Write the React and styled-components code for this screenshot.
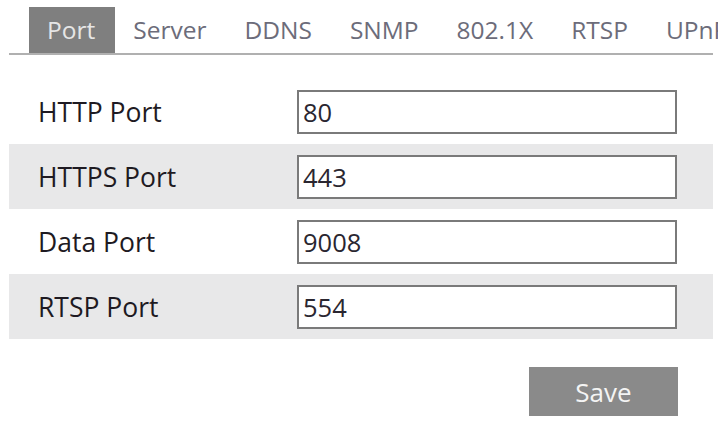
import React from 'react'
import styled, { createGlobalStyle } from 'styled-components'

const GlobalStyle = createGlobalStyle`
  body {
    margin: 0;
    background: #fff;
    font-family: "Open Sans", "Noto Sans", sans-serif;
  }
`

const tabs = ['Port', 'Server', 'DDNS', 'SNMP', '802.1X', 'RTSP', 'UPnP']

const fields = [
  { label: 'HTTP Port', value: '80' },
  { label: 'HTTPS Port', value: '443' },
  { label: 'Data Port', value: '9008' },
  { label: 'RTSP Port', value: '554' },
]

function App() {
  return (
    <Page>
      <GlobalStyle />
      <TabBar>
        {tabs.map((t, i) => (
          <Tab key={t} active={i === 0}>{t}</Tab>
        ))}
      </TabBar>
      <Form>
        {fields.map((f, i) => (
          <Row key={f.label} shaded={i % 2 === 1}>
            <Label>{f.label}</Label>
            <Input defaultValue={f.value} />
          </Row>
        ))}
      </Form>
      <Actions>
        <SaveButton>Save</SaveButton>
      </Actions>
    </Page>
  )
}

export default App

const Page = styled.div`
  width: 718px;
  height: 431px;
  overflow: hidden;
  padding: 7px 0 0 9px;
  box-sizing: border-box;
`

const TabBar = styled.div`
  display: flex;
  margin-right: 5px;
  padding-left: 20px;
  border-bottom: 2px solid #b0b0b0;
  white-space: nowrap;
`

const Tab = styled.div`
  flex: none;
  height: 46px;
  line-height: 46px;
  padding: 0 20px 0 18px;
  font-size: 24.5px;
  color: ${p => (p.active ? '#e6e6e6' : '#6c6c7a')};
  background: ${p => (p.active ? '#7f7f7f' : 'transparent')};
`

const Form = styled.div`
  margin: 24px 5px 0 0;
  display: flex;
  flex-direction: column;
`

const Row = styled.div`
  display: flex;
  align-items: center;
  height: 65px;
  padding-left: 29px;
  background: ${p => (p.shaded ? '#e8e8e9' : 'transparent')};
`

const Label = styled.div`
  width: 259px;
  font-size: 26.5px;
  color: #1e1a22;
`

const Input = styled.input`
  width: 380px;
  height: 44px;
  box-sizing: border-box;
  border: 2px solid #7a7a7a;
  padding: 0 4px;
  font-family: inherit;
  font-size: 25.5px;
  color: #2a2630;
  background: #fff;
  outline: none;
`

const Actions = styled.div`
  display: flex;
  justify-content: flex-end;
  padding-right: 40px;
  margin-top: 28px;
`

const SaveButton = styled.button`
  width: 149px;
  height: 49px;
  border: none;
  background: #8a8a8a;
  color: #f4f4f4;
  font-family: inherit;
  font-size: 26px;
  cursor: pointer;
`
